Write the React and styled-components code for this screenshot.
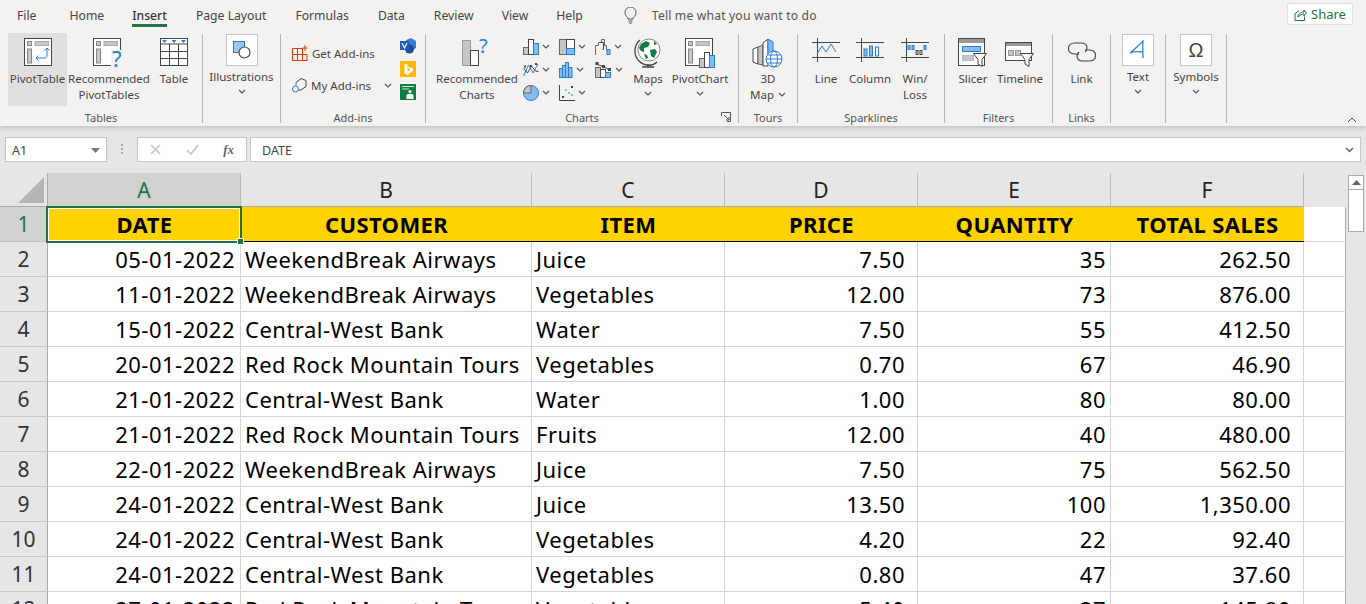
import React from "react";
import styled, { createGlobalStyle } from "styled-components";

const Global = createGlobalStyle`
  html, body { margin: 0; padding: 0; height: 604px; overflow: hidden; background: #e6e6e6; }
  body { font-family: "Noto Sans", "Open Sans", sans-serif; }
  #root { width: 1366px; height: 604px; overflow: hidden; }
`;

const Page = styled.div`width: 1366px; height: 604px; overflow: hidden; display: flex; flex-direction: column; background: #e6e6e6;`;
const TopBar = styled.div`height: 33px; background: #f3f2f1; display: flex; align-items: flex-start; font-size: 12.2px; color: #444;`;
const Tab = styled.div`
  height: 27px; line-height: 31px; margin-left: ${p => p.$ml}px; position: relative; white-space: nowrap;
  ${p => p.$active && `color: #333; font-weight: 500;
    &::after { content: ""; position: absolute; left: 0; right: 0; bottom: 0; height: 3px; background: #217346; }`}
`;
const Tell = styled.div`display: flex; align-items: center; gap: 15px; margin-left: 41px; height: 31px; color: #555; white-space: nowrap; letter-spacing: .15px;`;
const ShareBtn = styled.div`
  margin-left: auto; margin-right: 13px; margin-top: 3px; width: 66px; height: 22px; box-sizing: border-box;
  border: 1px solid #e1dfdd; background: #fff; color: #217346; font-size: 13px; border-radius: 2px;
  display: flex; align-items: center; justify-content: center; gap: 4px;
`;
const Ribbon = styled.div`height: 93px; background: #f3f2f1; display: flex; font-size: 11.5px; color: #444; box-shadow: 0 3px 4px rgba(0,0,0,.13); position: relative; z-index: 1;`;
const Group = styled.div`
  width: ${p => p.$w}px; height: 89px; box-sizing: border-box; border-right: 1px solid #b8b6b4;
  display: flex; flex-direction: column; margin-top: 1px; flex: none;
`;
const GroupBody = styled.div`height: 76px; margin-top: -1px; display: flex; padding-left: ${p => p.$pad || 0}px; align-items: flex-start;`;
const GroupLabel = styled.div`height: 14px; line-height: 18px; text-align: center; color: #555; font-size: 11px; position: relative;`;
const Launcher = styled.svg`position: absolute; right: 7px; top: 3px;`;
const Collapse = styled.svg`position: absolute; right: 9px; top: 84px;`;
const Big = styled.div`
  width: ${p => p.$w}px; height: 73px; flex: none; display: flex; flex-direction: column; align-items: center;
  background: ${p => p.$on ? "#e1dfdd" : "transparent"};
`;
const BigIcon = styled.div`height: 38px; padding-top: 5px; box-sizing: border-box; display: flex; align-items: flex-start; justify-content: center;`;
const BigLabel = styled.div`line-height: 16px; text-align: center; white-space: nowrap;`;
const Chev = styled.svg`display: ${p => p.$inline ? "inline-block" : "block"}; margin: ${p => p.$m || "4px auto 0"};`;
const Frame = styled.div`
  width: 32px; height: 32px; box-sizing: border-box; background: #fff; border: 1px solid #c8c6c4;
  display: flex; align-items: center; justify-content: center; margin-top: 1px;
  font-family: "Liberation Sans", sans-serif; font-size: 20px; color: #444;
`;
const FrameBtn = styled.div`width: 100%; display: flex; flex-direction: column; align-items: center;`;
const FrameLabel = styled.div`line-height: 16px; margin-top: 3px; white-space: nowrap;`;
const AddCol = styled.div`width: 103px; padding-left: 11px; display: flex; flex-direction: column; gap: 12px; padding-top: 10px;`;
const AddRow = styled.div`display: flex; align-items: center; gap: 4px; height: 20px; white-space: nowrap;`;
const SideIcons = styled.div`display: flex; flex-direction: column; gap: 7px; padding-top: 5px; margin-left: 5px;`;
const ChartGrid = styled.div`display: grid; grid-template-columns: repeat(3, 36px); grid-auto-rows: 23px; padding-top: 2px; margin-left: 5px; flex: none;`;
const ChartCell = styled.div`display: flex; align-items: center; gap: 3px;`;

const FormulaRow = styled.div`height: 47px; padding-top: 11px; box-sizing: border-box; display: flex; align-items: flex-start; flex: none;`;
const NameBox = styled.div`
  width: 102px; height: 25px; margin-left: 5px; box-sizing: border-box; background: #fff; border: 1px solid #c8c6c4;
  display: flex; align-items: center; justify-content: space-between; padding: 1px 6px 0; font-size: 12.5px; color: #444;
`;
const Dots = styled.div`width: 30px; display: flex; justify-content: center; align-items: center; height: 25px;`;
const FxBox = styled.div`
  width: 110px; height: 25px; box-sizing: border-box; background: #fff; border: 1px solid #c8c6c4;
  display: flex; align-items: center; padding: 0 12px; justify-content: space-between;
`;
const Fx = styled.span`font-family: "Liberation Serif", serif; font-style: italic; font-size: 13px; color: #666; font-weight: 700;`;
const FormulaInput = styled.div`
  width: 1111px; margin-left: 3px; height: 25px; box-sizing: border-box; background: #fff; border: 1px solid #c8c6c4;
  display: flex; align-items: center; justify-content: space-between; padding: 1px 6px 0 11px; font-size: 12.5px; color: #444;
`;

const SheetWrap = styled.div`position: relative; flex: 1; display: flex; overflow: hidden; min-height: 0;`;
const Sheet = styled.div`
  width: 1346px; flex: none; display: grid; grid-template-columns: 48px 193px 291px 193px 193px 193px 193px 42px;
  grid-template-rows: 34px; grid-auto-rows: 35px; align-content: start; position: relative;
  font-size: 22px; letter-spacing: .5px;
`;
const Corner = styled.div`background: #e6e6e6; position: relative; box-sizing: border-box; border-right: 1px solid #ababab; border-bottom: 1px solid #ababab;`;
const CornerTri = styled.div`position: absolute; right: 3px; bottom: 3px; width: 0; height: 0; border-style: solid; border-width: 0 0 26px 26px; border-color: transparent transparent #b5b5b5 transparent;`;
const ColHead = styled.div`
  box-sizing: border-box; background: ${p => p.$sel ? "#d2d2d2" : "#e6e6e6"};
  color: ${p => p.$sel ? "#217346" : "#222"}; border-bottom: 1px solid #ababab; border-right: 1px solid #bdbdbd;
  display: flex; align-items: center; justify-content: center; font-size: 21px; letter-spacing: 0; padding-top: 1px;
`;
const RowHead = styled.div`
  box-sizing: border-box; background: ${p => p.$sel ? "#d2d2d2" : "#e6e6e6"}; color: ${p => p.$sel ? "#217346" : "#333"};
  border-right: 1px solid #ababab; border-bottom: 1px solid #c6c6c6;
  display: flex; align-items: center; justify-content: center; font-size: 21px; letter-spacing: 0;
`;
const Cell = styled.div`
  box-sizing: border-box; background: #fff; color: #000; border-right: 1px solid #d4d4d4; border-bottom: 1px solid #d4d4d4;
  display: flex; align-items: center; white-space: nowrap; overflow: hidden;
  justify-content: ${p => p.$right ? "flex-end" : "flex-start"};
  padding: ${p => p.$right ? `0 ${p.$pad}px 0 0` : "0 0 0 4px"};
`;
const HeadCell = styled.div`
  box-sizing: border-box; background: #ffd200; color: #000; font-weight: 700; border-bottom: 1px solid #000;
  display: flex; align-items: center; justify-content: center; letter-spacing: .4px;
`;
const BlankCell = styled.div`box-sizing: border-box; background: #fff; border-bottom: 1px solid #d4d4d4; border-right: 1px solid #ababab;`;
const Selection = styled.div`
  position: absolute; left: 46px; top: 33px; width: 196px; height: 37px; box-sizing: border-box;
  border: 2px solid #217346; outline: 1px solid #fff; outline-offset: -3px; pointer-events: none;
  &::after { content: ""; position: absolute; right: -4px; bottom: -4px; width: 5px; height: 5px; background: #217346; border: 1px solid #fff; }
`;
const Scroll = styled.div`flex: 1; display: flex; flex-direction: column; padding: 2px 2px 0 2px;`;
const ScrollBtn = styled.div`height: 15px; box-sizing: border-box; background: #fff; border: 1px solid #ababab; display: flex; align-items: center; justify-content: center;`;
const ScrollThumb = styled.div`height: 43px; margin-top: -1px; box-sizing: border-box; background: #fff; border: 1px solid #ababab;`;

const G = "#444", B = "#2b7cd3", L = "#83bdf0", S = "#c8c6c4", D = "#666";

const ChevIcon = ({ m, inline, color = "#555" }) => (
  <Chev $m={m} $inline={inline} width="8" height="5" viewBox="0 0 8 5"><path d="M1 1l3 3 3-3" fill="none" stroke={color} strokeWidth="1.2" /></Chev>
);
const PivotBase = ({ children, w = 28, h = 28 }) => (
  <svg width={w} height={h} viewBox={`0 0 ${w} ${h}`} fill="none" overflow="visible">
    <rect x=".5" y=".5" width="27" height="27" fill="#fff" stroke={G} />
    <rect x="3.500" y="3.500" width="4" height="4" fill={S} stroke="#888" /><rect x="11" y="3.500" width="13.500" height="4" fill={S} stroke="#aaa" />
    <rect x="3.500" y="11" width="4" height="14" fill={S} stroke="#888" />
    {children}
  </svg>
);
const PivotIcon = () => (
  <PivotBase>
    <path d="M23 10v7c0 2-1 3-3 3h-8M20.500 12.500L23 10l2.500 2.500M14.500 17.500L12 20l2.500 2.500" stroke={B} />
  </PivotBase>
);
const RecPivotIcon = () => (
  <PivotBase w={32} h={30}>
    <rect x="18" y="12" width="13" height="18" fill="#f3f2f1" />
    <text x="19" y="29" fontFamily="Noto Sans" fontSize="22" fill={B}>?</text>
  </PivotBase>
);
const TableIcon = () => (
  <svg width="28" height="28" viewBox="0 0 28 28" fill="none">
    <rect x=".5" y=".5" width="27" height="27" fill="#fff" stroke={G} />
    <path d="M.5 6h27M.5 13.500h27M.5 20.500h27M9.500 6v21M18.500 6v21" stroke={G} />
    <path d="M2 2h5L4.500 5zM11.500 2h5L14 5zM21 2h5l-2.500 3z" fill={B} />
  </svg>
);
const ShapesIcon = () => (
  <svg width="18" height="18" viewBox="0 0 18 18" fill="none">
    <rect x=".5" y=".5" width="11" height="11" fill="#9cc8f0" stroke={B} />
    <circle cx="11.500" cy="11.500" r="5.500" fill="#fff" stroke={G} strokeWidth="1.200" />
  </svg>
);
const GetAddIcon = () => (
  <svg width="16" height="16" viewBox="0 0 16 16" fill="none" stroke="#d83b01">
    <path d="M.5 3.500h10v12H.5zM.5 9.500h14.500v6h-4.500M5.500 3.500v12M10.500 3.500v6" />
    <path d="M13 0v6M10.500 3h5" />
  </svg>
);
const MyAddIcon = () => (
  <svg width="15" height="16" viewBox="0 0 15 16" fill="none">
    <path d="M4 5.500L9 1.500l5 2v6L9 13H6.500" stroke={G} />
    <path d="M4 5.500v3" stroke={B} />
    <circle cx="3.500" cy="12" r="3" stroke={B} />
  </svg>
);
const VisioIcon = () => (
  <svg width="16" height="16" viewBox="0 0 16 16">
    <path d="M6 2l5-2 5 3v7l-5 3-5-2z" fill="#3a7ecb" /><circle cx="9.500" cy="11" r="4.500" fill="#1a4e9c" />
    <rect x="0" y="3" width="9" height="9" fill="#1d5cb5" />
    <path d="M2 5l2.500 5L7 5" fill="none" stroke="#fff" strokeWidth="1.100" />
  </svg>
);
const BingIcon = () => (
  <svg width="16" height="16" viewBox="0 0 16 16">
    <rect width="16" height="16" fill="#ffb900" />
    <path d="M4.500 2.500l3 1v7l3-1.800-1.500-.7-1-2.600 5 1.800v2.600L7.500 14l-3-1.500z" fill="#fff" />
  </svg>
);
const FormsIcon = () => (
  <svg width="16" height="16" viewBox="0 0 16 16">
    <rect width="16" height="16" fill="#107c41" />
    <path d="M2 2.500h12M2 5h7" stroke="#cfe8d8" />
    <circle cx="10" cy="7.500" r="1.600" fill="#fff" />
    <path d="M6.500 15v-3.500c0-1 1-1.800 3.500-1.800s3.500.8 3.500 1.800V15z" fill="#fff" />
  </svg>
);
const RecChartIcon = () => (
  <svg width="30" height="28" viewBox="0 0 30 28" overflow="visible">
    <rect x=".5" y="2.500" width="8" height="25" fill={S} stroke="#999" />
    <rect x="8.500" y="12.500" width="8" height="15" fill="#fff" stroke={G} />
    <text x="17" y="15" fontFamily="Noto Sans" fontSize="20" fill={B}>?</text>
  </svg>
);
const M1 = () => (<svg width="16" height="16" viewBox="0 0 16 16"><rect x=".5" y="8.500" width="5" height="7" fill={S} stroke={D} /><rect x="5.500" y=".5" width="5" height="15" fill="#fff" stroke={G} /><rect x="10.500" y="4.500" width="5" height="11" fill={L} stroke={B} /></svg>);
const M2 = () => (<svg width="16" height="16" viewBox="0 0 16 16"><rect x=".5" y=".5" width="7" height="15" fill={S} stroke={D} /><rect x="7.500" y=".5" width="8" height="9" fill="#fff" stroke={G} /><rect x="7.500" y="9.500" width="8" height="6" fill={L} stroke={B} /></svg>);
const M3 = () => (<svg width="16" height="16" viewBox="0 0 16 16" fill="none"><path d="M.5 16V6.500h3V3.500h3V.5h3v6h2v4" stroke={D} /><path d="M4.500 3.500h4v7h-1" stroke={G} /><rect x="12" y="10.500" width="3" height="5" fill={L} stroke={B} /></svg>);
const M4 = () => (<svg width="16" height="16" viewBox="0 0 16 16" fill="none"><path d="M.5 14L5.500 3 10 11l5-9" stroke={B} /><path d="M.5 6l4 5 4-7 4 5 3 .5" stroke={G} /><rect x="1" y="3.500" width="2" height="2" fill={G} /><rect x="7" y="3" width="2" height="2" fill={G} /><rect x="12" y="1" width="2" height="2" fill={G} /></svg>);
const M5 = () => (<svg width="14" height="16" viewBox="0 0 14 16"><rect x=".5" y="6.500" width="3" height="9" fill={L} stroke={B} /><rect x="3.500" y="3.500" width="3" height="12" fill={L} stroke={B} /><rect x="6.500" y=".5" width="3" height="15" fill={L} stroke={B} /><rect x="9.500" y="5.500" width="3.500" height="10" fill={L} stroke={B} /></svg>);
const M6 = () => (<svg width="17" height="16" viewBox="0 0 17 16" fill="none"><rect x=".5" y="5.500" width="5" height="10" fill={S} stroke={D} /><rect x="5.500" y="7.500" width="5" height="8" fill="#fff" stroke={G} /><rect x="10.500" y="10.500" width="5" height="5" fill={L} stroke={B} /><path d="M1 2l7 2.500 6 3" stroke={G} /><rect x=".5" y="0" width="3" height="3" fill={G} /><rect x="7" y="3" width="3" height="3" fill={G} /><rect x="13" y="6" width="3" height="3" fill={G} /></svg>);
const M7 = () => (<svg width="16" height="16" viewBox="0 0 16 16"><circle cx="8" cy="8" r="7.500" fill={L} stroke={B} /><path d="M8 8V.5A7.500 7.500 0 0 0 .5 8z" fill={S} stroke={D} /></svg>);
const M8 = () => (<svg width="16" height="16" viewBox="0 0 16 16" fill="none"><path d="M.5 0v15.500H16" stroke={G} /><rect x="3" y="11" width="2" height="2" fill={G} /><rect x="12" y="1" width="2" height="2" fill={G} /><rect x="6" y="4" width="2" height="2" fill={L} /><rect x="9" y="7" width="2" height="2" fill={L} /><rect x="12" y="9" width="2" height="2" fill={L} /></svg>);
const GlobeIcon = () => (
  <svg width="28" height="30" viewBox="0 0 28 30" fill="none">
    <path d="M6 2C0 7-1 17 5 23s14 5 18 1" stroke={G} strokeWidth="1.300" /><path d="M14 26v3M8 29h12" stroke={G} strokeWidth="1.300" />
    <circle cx="15" cy="12" r="11" fill="#fff" stroke="#888" />
    <path d="M7 6l5-3 4 2-2 4-4 1v4l-3-1-2-3zM16 12l5-1 2 3-3 6-3-2zM10 16l3 1 1 3-2 1z M20 3l3 3-3 1z" fill="#107c41" />
  </svg>
);
const PivotChartIcon = () => (
  <PivotBase w={30} h={30}>
    <rect x="14.500" y="20.500" width="5" height="9" fill={S} stroke={D} />
    <rect x="19.500" y="14.500" width="5" height="15" fill="#fff" stroke={G} />
    <rect x="24.500" y="17.500" width="5" height="12" fill={L} stroke={B} />
  </PivotBase>
);
const MapIcon = () => (
  <svg width="32" height="30" viewBox="0 0 32 30" fill="none">
    <path d="M1 11l5-2v17l-5-2z" fill="#fff" stroke={G} />
    <path d="M6 9l5-2v20l-5-1z" fill={S} stroke={D} />
    <path d="M11 5l5-4v27h-5z" fill="#fff" stroke={G} />
    <path d="M16 1l5 3v16h-5z" fill={L} stroke={B} />
    <circle cx="22" cy="21" r="8" fill="#fff" stroke={B} />
    <ellipse cx="22" cy="21" rx="3.500" ry="8" stroke={B} /><path d="M14 21h16M15.500 17h13M15.500 25h13" stroke={B} />
  </svg>
);
const SparkBase = ({ children }) => (
  <svg width="28" height="24" viewBox="0 0 28 24" fill="none">
    <path d="M0 4.500h28M0 19.500h28M5.500 0v24" stroke={G} />{children}
  </svg>
);
const LineSpark = () => <SparkBase><path d="M5 16l5-8 4 6 5-8 5 8" stroke={B} /></SparkBase>;
const ColSpark = () => (
  <SparkBase><rect x="8" y="11" width="3" height="7" fill={L} stroke={B} /><rect x="13.500" y="8" width="3" height="10" fill={L} stroke={B} /><rect x="19.500" y="9" width="3" height="9" fill="none" stroke={B} /></SparkBase>
);
const WinSpark = () => (
  <SparkBase>
    <rect x="7" y="7.500" width="2" height="4" fill={L} stroke={B} /><rect x="11" y="7.500" width="2" height="4" fill={L} stroke={B} />
    <rect x="15" y="12.500" width="2" height="4" stroke={G} /><rect x="19" y="12.500" width="2" height="4" stroke={G} /><rect x="23" y="7.500" width="2" height="4" fill={L} stroke={B} />
  </SparkBase>
);
const Funnel = ({ x, y }) => (
  <path transform={`translate(${x} ${y})`} d="M.5.500h13l-4.500 6v7l-4-2.500V6.500z" fill="#fff" stroke={G} />
);
const SlicerIcon = () => (
  <svg width="30" height="30" viewBox="0 0 30 30" fill="none">
    <rect x=".5" y=".5" width="26" height="27" fill="#fff" stroke={G} /><rect x="1" y="1" width="25" height="4" fill="#999" />
    <rect x="4.500" y="8.500" width="18" height="5" fill={L} stroke={B} />
    <rect x="4.500" y="17.500" width="11" height="5" fill={S} stroke="#bbb" />
    <Funnel x="15" y="15" />
  </svg>
);
const TimelineIcon = () => (
  <svg width="30" height="28" viewBox="0 0 30 28" fill="none" style={{ marginTop: 4 }}>
    <rect x=".5" y=".5" width="26" height="18" fill="#fff" stroke={G} /><rect x="1" y="1" width="25" height="3" fill="#999" />
    <rect x="3.500" y="8.500" width="5" height="5" fill={S} stroke="#999" /><rect x="10.500" y="8.500" width="5" height="5" fill={S} stroke="#999" />
    <Funnel x="15" y="11" />
  </svg>
);
const LinkIcon = () => (
  <svg width="28" height="20" viewBox="0 0 28 20" fill="none" stroke={G} strokeWidth="1.100" style={{ marginTop: 4 }}>
    <path d="M11 12H7C3 12 .5 10 .5 6.500S3 1 7 1h6c4 0 6 2 6 5 0 1.500-1 3-2 4" />
    <path d="M17 8h4c4 0 6.500 2 6.500 5.500S25 19 21 19h-6c-4 0-6-2-6-5 0-1.500 1-3 2-4" />
  </svg>
);
const TextIcon = () => (
  <svg width="18" height="20" viewBox="0 0 18 20" fill="none" stroke="#2b88d8" strokeWidth="1.300">
    <path d="M1 13C5 10 10 5 14 1c-.5 5 0 12 0 17M1 13c4-1.500 9-1.500 13-1" />
  </svg>
);
const ShareIcon = () => (
  <svg width="13" height="13" viewBox="0 0 13 13" fill="none" stroke="#217346">
    <path d="M1 5.500v7h9.500v-4M1 5.500l4-3" /><path d="M4 9c0-3 3-5 6-5V2l2.500 3L10 8V6c-2 0-4 1-6 3z" />
  </svg>
);
const Bulb = () => (
  <svg width="13" height="17" viewBox="0 0 13 17" fill="none" stroke="#555">
    <path d="M4 12c0-2-3-3-3-6.500a5.500 5.500 0 0 1 11 0C12 9 9 10 9 12zM4.500 14h4M5 16h3" />
  </svg>
);

const data = [
  ["05-01-2022", "WeekendBreak Airways", "Juice", "7.50", "35", "262.50"],
  ["11-01-2022", "WeekendBreak Airways", "Vegetables", "12.00", "73", "876.00"],
  ["15-01-2022", "Central-West Bank", "Water", "7.50", "55", "412.50"],
  ["20-01-2022", "Red Rock Mountain Tours", "Vegetables", "0.70", "67", "46.90"],
  ["21-01-2022", "Central-West Bank", "Water", "1.00", "80", "80.00"],
  ["21-01-2022", "Red Rock Mountain Tours", "Fruits", "12.00", "40", "480.00"],
  ["22-01-2022", "WeekendBreak Airways", "Juice", "7.50", "75", "562.50"],
  ["24-01-2022", "Central-West Bank", "Juice", "13.50", "100", "1,350.00"],
  ["24-01-2022", "Central-West Bank", "Vegetables", "4.20", "22", "92.40"],
  ["24-01-2022", "Central-West Bank", "Vegetables", "0.80", "47", "37.60"],
  ["27-01-2022", "Red Rock Mountain Tours", "Vegetables", "5.40", "27", "145.80"],
];
const tabs = [["File", 17], ["Home", 33], ["Insert", 28], ["Page Layout", 29], ["Formulas", 29], ["Data", 29], ["Review", 29], ["View", 28], ["Help", 28]];
const heads = ["DATE", "CUSTOMER", "ITEM", "PRICE", "QUANTITY", "TOTAL SALES"];
const minis = [M1, M2, M3, M4, M5, M6, M7, M8];

export default function App() {
  return (
    <Page>
      <Global />
      <TopBar>
        {tabs.map(([t, ml]) => <Tab key={t} $ml={ml} $active={t === "Insert"}>{t}</Tab>)}
        <Tell><Bulb />Tell me what you want to do</Tell>
        <ShareBtn><ShareIcon />Share</ShareBtn>
      </TopBar>
      <Ribbon>
        <Group $w={203}>
          <GroupBody $pad={8}>
            <Big $w={59} $on><BigIcon><PivotIcon /></BigIcon><BigLabel>PivotTable</BigLabel></Big>
            <Big $w={84}><BigIcon><RecPivotIcon /></BigIcon><BigLabel>Recommended<br />PivotTables</BigLabel></Big>
            <Big $w={46}><BigIcon><TableIcon /></BigIcon><BigLabel>Table</BigLabel></Big>
          </GroupBody>
          <GroupLabel>Tables</GroupLabel>
        </Group>
        <Group $w={78}>
          <GroupBody><FrameBtn><Frame><ShapesIcon /></Frame><FrameLabel>Illustrations</FrameLabel><ChevIcon /></FrameBtn></GroupBody>
          <GroupLabel>&nbsp;</GroupLabel>
        </Group>
        <Group $w={145}>
          <GroupBody>
            <AddCol>
              <AddRow><GetAddIcon />Get Add-ins</AddRow>
              <AddRow><MyAddIcon />My Add-ins<ChevIcon m="0 0 0 9px" /></AddRow>
            </AddCol>
            <SideIcons><VisioIcon /><BingIcon /><FormsIcon /></SideIcons>
          </GroupBody>
          <GroupLabel>Add-ins</GroupLabel>
        </Group>
        <Group $w={313}>
          <GroupBody $pad={10}>
            <Big $w={82}><BigIcon><RecChartIcon /></BigIcon><BigLabel>Recommended<br />Charts</BigLabel></Big>
            <ChartGrid>
              {minis.map((M, i) => <ChartCell key={i}><M /><ChevIcon m="0" /></ChartCell>)}
            </ChartGrid>
            <Big $w={34}><BigIcon><GlobeIcon /></BigIcon><BigLabel>Maps</BigLabel><ChevIcon /></Big>
            <Big $w={70}><BigIcon><PivotChartIcon /></BigIcon><BigLabel>PivotChart</BigLabel><ChevIcon /></Big>
          </GroupBody>
          <GroupLabel>Charts
            <Launcher width="10" height="10" viewBox="0 0 10 10" fill="none" stroke="#555"><path d="M.5 4V.5H9.500V9.500H6M3 3l5 5M8 5v3H5" /></Launcher>
          </GroupLabel>
        </Group>
        <Group $w={59}>
          <GroupBody><Big $w={58}><BigIcon><MapIcon /></BigIcon><BigLabel>3D<br />Map <ChevIcon inline m="0 0 2px 1px" /></BigLabel></Big></GroupBody>
          <GroupLabel>Tours</GroupLabel>
        </Group>
        <Group $w={147}>
          <GroupBody $pad={6}>
            <Big $w={44}><BigIcon><LineSpark /></BigIcon><BigLabel>Line</BigLabel></Big>
            <Big $w={44}><BigIcon><ColSpark /></BigIcon><BigLabel>Column</BigLabel></Big>
            <Big $w={46}><BigIcon><WinSpark /></BigIcon><BigLabel>Win/<br />Loss</BigLabel></Big>
          </GroupBody>
          <GroupLabel>Sparklines</GroupLabel>
        </Group>
        <Group $w={108}>
          <GroupBody $pad={3}>
            <Big $w={50}><BigIcon><SlicerIcon /></BigIcon><BigLabel>Slicer</BigLabel></Big>
            <Big $w={44}><BigIcon><TimelineIcon /></BigIcon><BigLabel>Timeline</BigLabel></Big>
          </GroupBody>
          <GroupLabel>Filters</GroupLabel>
        </Group>
        <Group $w={58}>
          <GroupBody><Big $w={57}><BigIcon><LinkIcon /></BigIcon><BigLabel>Link</BigLabel></Big></GroupBody>
          <GroupLabel>Links</GroupLabel>
        </Group>
        <Group $w={55}>
          <GroupBody><FrameBtn><Frame><TextIcon /></Frame><FrameLabel>Text</FrameLabel><ChevIcon /></FrameBtn></GroupBody>
          <GroupLabel>&nbsp;</GroupLabel>
        </Group>
        <Group $w={61}>
          <GroupBody><FrameBtn><Frame>Ω</Frame><FrameLabel>Symbols</FrameLabel><ChevIcon /></FrameBtn></GroupBody>
          <GroupLabel>&nbsp;</GroupLabel>
        </Group>
        <Collapse width="10" height="6" viewBox="0 0 10 6" fill="none" stroke="#444"><path d="M1 5l4-4 4 4" /></Collapse>
      </Ribbon>
      <FormulaRow>
        <NameBox>A1<svg width="9" height="5" viewBox="0 0 9 5"><path d="M0 0h9L4.500 5z" fill="#777" /></svg></NameBox>
        <Dots><svg width="3" height="11" viewBox="0 0 3 11" fill="#aaa"><rect x="0" y="0" width="2" height="2" /><rect x="0" y="4" width="2" height="2" /><rect x="0" y="8" width="2" height="2" /></svg></Dots>
        <FxBox>
          <svg width="11" height="11" viewBox="0 0 11 11" stroke="#c4c4c4" strokeWidth="1.500"><path d="M1 1l9 9M10 1l-9 9" /></svg>
          <svg width="13" height="11" viewBox="0 0 13 11" fill="none" stroke="#c4c4c4" strokeWidth="1.700"><path d="M1 6l4 4 7-9" /></svg>
          <Fx>fx</Fx>
        </FxBox>
        <FormulaInput>DATE<svg width="9" height="6" viewBox="0 0 9 6" fill="none" stroke="#666" strokeWidth="1.500"><path d="M1 1l3.500 3.500L8 1" /></svg></FormulaInput>
      </FormulaRow>
      <SheetWrap>
        <Sheet>
          <Corner><CornerTri /></Corner>
          {["A", "B", "C", "D", "E", "F"].map(c => <ColHead key={c} $sel={c === "A"}>{c}</ColHead>)}
          <div />
          <RowHead $sel>1</RowHead>
          {heads.map(h => <HeadCell key={h}>{h}</HeadCell>)}
          <BlankCell />
          {data.map((r, i) => (
            <React.Fragment key={i}>
              <RowHead>{i + 2}</RowHead>
              <Cell $right $pad={5}>{r[0]}</Cell>
              <Cell>{r[1]}</Cell>
              <Cell>{r[2]}</Cell>
              <Cell $right $pad={12}>{r[3]}</Cell>
              <Cell $right $pad={4}>{r[4]}</Cell>
              <Cell $right $pad={12}>{r[5]}</Cell>
              <BlankCell />
            </React.Fragment>
          ))}
          <Selection />
        </Sheet>
        <Scroll>
          <ScrollBtn><svg width="9" height="5" viewBox="0 0 9 5"><path d="M0 5h9L4.500 0z" fill="#666" /></svg></ScrollBtn>
          <ScrollThumb />
        </Scroll>
      </SheetWrap>
    </Page>
  );
}
